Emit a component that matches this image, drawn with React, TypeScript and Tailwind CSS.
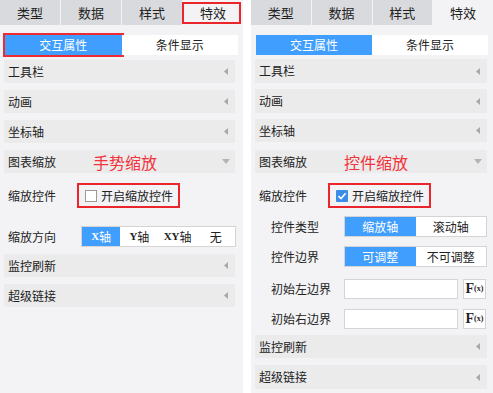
import type { ReactNode } from "react";

const FONT = { fontFamily: '"Noto Sans CJK SC", "Noto Sans", sans-serif' };

function Tabs() {
  const tabs = ["类型", "数据", "样式", "特效"];
  return (
    <div className="grid h-[25px] grid-cols-4 gap-px">
      {tabs.map((t, i) => (
        <div
          key={t}
          className={
            "flex items-center justify-center text-[13px] text-[#222] " +
            (i === 3 ? "bg-[#f3f3f5]" : "bg-[#d9dadd]")
          }
        >
          {t}
        </div>
      ))}
    </div>
  );
}

function SubTabs({ marked }: { marked?: boolean }) {
  return (
    <div className="mx-[5px] mt-[10px] flex h-[20px] text-[12px]">
      <div
        className={
          "flex flex-1 items-center justify-center bg-[#409eff] text-white " +
          (marked ? "outline-2 outline-[#ee2a32]" : "")
        }
      >
        交互属性
      </div>
      <div className="flex flex-1 items-center justify-center bg-white text-[#222]">条件显示</div>
    </div>
  );
}

function Arrow({ open }: { open?: boolean }) {
  return open ? (
    <svg width="8" height="5" viewBox="0 0 8 5" className="mr-[5px]">
      <path d="M0 0 H8 L4 5 Z" fill="#b4b4b4" />
    </svg>
  ) : (
    <svg width="4" height="7" viewBox="0 0 4 7" className="mr-[7px]">
      <path d="M4 0 V7 L0 3.5 Z" fill="#a8a8a8" />
    </svg>
  );
}

function Header({ label, open, note, className }: { label: string; open?: boolean; note?: string; className?: string }) {
  return (
    <div className={"flex h-[23px] items-center bg-[#ebebeb] pl-[4px] text-[12px] text-[#222] " + (className ?? "")}>
      <span className="w-[85px]">{label}</span>
      {note && <span className="text-[16px] leading-none text-[#f2333c]">{note}</span>}
      <div className="flex-1" />
      <Arrow open={open} />
    </div>
  );
}

function Checkbox({ checked }: { checked?: boolean }) {
  return checked ? (
    <span className="flex h-[12px] w-[12px] items-center justify-center rounded-[1px] bg-[#3a8ee6]">
      <svg width="10" height="10" viewBox="0 0 10 10">
        <path d="M1.5 5.2 L4 7.6 L8.6 2.3" stroke="white" strokeWidth="1.6" fill="none" />
      </svg>
    </span>
  ) : (
    <span className="h-[12px] w-[12px] border border-[#9a9a9a] bg-white" />
  );
}

function ZoomToggle({ checked }: { checked?: boolean }) {
  return (
    <div className="mt-[10px] flex h-[25px] items-center text-[12px] text-[#222]">
      <span className="w-[77px] pl-[8px]">缩放控件</span>
      <div className="flex h-[25px] w-[103px] items-center gap-[4px] border-2 border-[#ea262c] pl-[6px]">
        <Checkbox checked={checked} />
        <span>开启缩放控件</span>
      </div>
    </div>
  );
}

function Segment({ items, className }: { items: ReactNode[]; className?: string }) {
  return (
    <div className={"flex h-[21px] border border-[#d4d4d4] bg-white text-[12px] " + (className ?? "")}>
      {items.map((it, i) => (
        <div
          key={i}
          className={
            "flex flex-1 items-center justify-center " + (i === 0 ? "bg-[#409eff] text-white" : "text-[#222]")
          }
        >
          {it}
        </div>
      ))}
    </div>
  );
}

function Ax({ c }: { c: string }) {
  return (
    <span className="text-[11px] font-bold" style={{ fontFamily: '"Liberation Serif", serif' }}>
      {c}
    </span>
  );
}

function Row({ label, children, className }: { label: string; children: ReactNode; className?: string }) {
  return (
    <div className={"flex items-center text-[12px] text-[#222] " + (className ?? "")}>
      <span className="w-[93px] pl-[20px]">{label}</span>
      {children}
    </div>
  );
}

function Formula() {
  return (
    <div className="flex h-[20px] w-[23px] items-center justify-center border border-[#d4d4d4] bg-white text-[#222]" style={{ fontFamily: '"Liberation Serif", serif' }}>
      <span className="text-[14px] font-bold leading-none">F</span>
      <span className="text-[8px] font-bold leading-none">(x)</span>
    </div>
  );
}

function LeftPanel() {
  return (
    <div className="h-full w-[243px] bg-[#f3f3f5]">
      <div className="relative">
        <Tabs />
        <div className="absolute top-[2px] right-[2px] h-[22px] w-[59px] border-2 border-[#ea262c]" />
      </div>
      <SubTabs marked />
      <div className="mr-[8px] ml-[4px]">
        <Header label="工具栏" className="mt-[5px]" />
        <Header label="动画" className="mt-[7px]" />
        <Header label="坐标轴" className="mt-[7px]" />
        <Header label="图表缩放" open note="手势缩放" className="mt-[7px]" />
      </div>
      <ZoomToggle />
      <div className="mt-[18px] flex items-center text-[12px] text-[#222]">
        <span className="w-[81px] pl-[8px]">缩放方向</span>
        <Segment
          className="w-[155px]"
          items={[
            <><Ax c="X" />轴</>,
            <><Ax c="Y" />轴</>,
            <><Ax c="XY" />轴</>,
            "无",
          ]}
        />
      </div>
      <div className="mr-[8px] ml-[4px]">
        <Header label="监控刷新" className="mt-[7px]" />
        <Header label="超级链接" className="mt-[7px]" />
      </div>
    </div>
  );
}

function RightPanel() {
  return (
    <div className="h-full w-[242px] bg-[#f3f3f5]">
      <Tabs />
      <SubTabs />
      <div className="mr-[6px] ml-[4px]">
        <Header label="工具栏" className="mt-[4px] h-[24px]" />
        <Header label="动画" className="mt-[6px] h-[24px]" />
        <Header label="坐标轴" className="mt-[6px]" />
        <Header label="图表缩放" open note="控件缩放" className="mt-[8px]" />
      </div>
      <ZoomToggle checked />
      <Row label="控件类型" className="mt-[8px]">
        <Segment className="w-[143px]" items={["缩放轴", "滚动轴"]} />
      </Row>
      <Row label="控件边界" className="mt-[9px]">
        <Segment className="w-[143px]" items={["可调整", "不可调整"]} />
      </Row>
      <Row label="初始左边界" className="mt-[12px]">
        <div className="h-[20px] w-[114px] border border-[#d4d4d4] bg-white" />
        <div className="w-[5px]" />
        <Formula />
      </Row>
      <Row label="初始右边界" className="mt-[10px]">
        <div className="h-[20px] w-[114px] border border-[#d4d4d4] bg-white" />
        <div className="w-[5px]" />
        <Formula />
      </Row>
      <div className="mr-[6px] ml-[4px]">
        <Header label="监控刷新" className="mt-[6px]" />
        <Header label="超级链接" className="mt-[7px] h-[24px]" />
      </div>
    </div>
  );
}

export default function App() {
  return (
    <div className="flex h-[393px] w-[493px] gap-[8px] bg-white" style={FONT}>
      <LeftPanel />
      <RightPanel />
    </div>
  );
}
